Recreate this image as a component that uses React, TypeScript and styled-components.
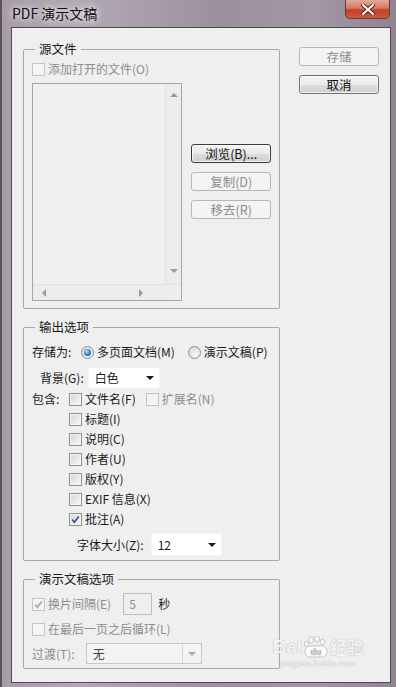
import React from 'react';
import styled, { createGlobalStyle, css } from 'styled-components';

const GlobalStyle = createGlobalStyle`
  html, body {
    margin: 0;
    padding: 0;
    width: 396px;
    height: 687px;
    overflow: hidden;
  }
  body {
    font-family: "Noto Sans CJK SC", "Noto Sans", sans-serif;
    font-size: 12px;
    color: #1a1a1a;
  }
`;

const Frame = styled.div`
  width: 396px;
  height: 687px;
  box-sizing: border-box;
  display: flex;
  flex-direction: column;
  background: linear-gradient(90deg, #a89ca9 0%, #b3a9b4 20%, #9c909d 55%, #a397a4 80%, #8f8490 100%);
  border-left: 2px solid #5a555b;
  position: relative;
`;

const TitleBar = styled.div`
  height: 27px;
  display: flex;
  justify-content: space-between;
  align-items: flex-start;
  flex-shrink: 0;
`;

const Title = styled.div`
  padding-left: 10px;
  line-height: 27px;
  font-size: 14px;
  color: #111;
  text-shadow: 0 0 6px rgba(255, 255, 255, 0.9), 0 0 10px rgba(255, 255, 255, 0.6);
`;

const CloseButton = styled.div`
  width: 45px;
  height: 19px;
  margin-right: 6px;
  box-sizing: border-box;
  border: 1px solid #6b3a34;
  border-top: none;
  border-radius: 0 0 5px 5px;
  background: linear-gradient(180deg, #e6a898 0%, #d57b68 45%, #c2412a 55%, #cc5a3e 100%);
  display: flex;
  align-items: center;
  justify-content: center;
`;

const Client = styled.div`
  flex: 1;
  margin: 0 5px 4px 9px;
  border: 1px solid #4f4a52;
  background: #efefef;
  display: flex;
  padding: 13px 11px 0 11px;
  position: relative;
`;

const LeftColumn = styled.div`
  width: 257px;
  display: flex;
  flex-direction: column;
  gap: 10px;
`;

const RightColumn = styled.div`
  width: 80px;
  margin-left: 19px;
  padding-top: 6px;
  display: flex;
  flex-direction: column;
  gap: 9px;
`;

const Group = styled.fieldset<{ $pt: number; $pb: number }>`
  margin: 0;
  min-width: 0;
  padding: ${(p) => p.$pt}px 8px ${(p) => p.$pb}px 8px;
  border: 1px solid #a7a7a7;
  border-radius: 2px;
  display: flex;
  flex-direction: column;
`;

const Legend = styled.legend`
  padding: 0 4px;
  margin-left: 3px;
  font-size: 12.5px;
  line-height: 16px;
  color: #1a1a1a;
`;

const Button = styled.div<{ $disabled?: boolean; $focused?: boolean }>`
  height: 19px;
  box-sizing: border-box;
  border: 1px solid #707070;
  border-radius: 3px;
  background: linear-gradient(180deg, #f3f3f3 0%, #ebebeb 50%, #dddddd 51%, #cfcfcf 100%);
  box-shadow: inset 0 0 0 1px rgba(255, 255, 255, 0.7);
  font-size: 12.5px;
  line-height: 17px;
  text-align: center;
  color: #111;
  ${(p) =>
    p.$focused &&
    css`
      border-color: #3a3a3a;
    `}
  ${(p) =>
    p.$disabled &&
    css`
      border-color: #b5b8ba;
      background: #f4f4f4;
      box-shadow: none;
      color: #8b8b8b;
    `}
`;

const Row = styled.div<{ $h?: number; $mt?: number; $ml?: number }>`
  display: flex;
  align-items: center;
  height: ${(p) => p.$h ?? 20}px;
  margin-top: ${(p) => p.$mt ?? 0}px;
  margin-left: ${(p) => p.$ml ?? 0}px;
  flex-shrink: 0;
`;

const Text = styled.span<{ $disabled?: boolean; $ml?: number; $w?: number }>`
  color: ${(p) => (p.$disabled ? '#8d8d8d' : '#1a1a1a')};
  margin-left: ${(p) => p.$ml ?? 0}px;
  ${(p) => p.$w !== undefined && `width: ${p.$w}px;`}
  white-space: nowrap;
  line-height: 20px;
  flex-shrink: 0;
`;

const CheckLabel = styled.label<{ $ml?: number }>`
  display: flex;
  align-items: center;
  gap: 3px;
  height: 20px;
  margin-left: ${(p) => p.$ml ?? 0}px;
  flex-shrink: 0;
`;

const Box = styled.span<{ $disabled?: boolean }>`
  width: 13px;
  height: 13px;
  box-sizing: border-box;
  border: 1px solid ${(p) => (p.$disabled ? '#c3c3c3' : '#8e8f8f')};
  background: ${(p) =>
    p.$disabled ? '#f4f4f4' : 'linear-gradient(135deg, #d0d0d0 0%, #ececec 60%, #f8f8f8 100%)'};
  box-shadow: inset 0 0 0 1px #f6f6f6;
  display: flex;
  align-items: center;
  justify-content: center;
  flex-shrink: 0;
`;

const Radio = styled.span<{ $on?: boolean; $ml?: number }>`
  width: 13px;
  height: 13px;
  margin-left: ${(p) => p.$ml ?? 0}px;
  box-sizing: border-box;
  border-radius: 50%;
  border: 1px solid #8e8f8f;
  background: radial-gradient(circle at 60% 65%, #f7f7f7 0%, #e2e2e2 60%, #cfcfcf 100%);
  display: flex;
  align-items: center;
  justify-content: center;
  flex-shrink: 0;
  &::after {
    content: '';
    display: ${(p) => (p.$on ? 'block' : 'none')};
    width: 7px;
    height: 7px;
    border-radius: 50%;
    background: radial-gradient(circle at 40% 35%, #bfe6ff 0%, #3c8fd6 45%, #164a86 100%);
  }
`;

const Select = styled.div<{ $w: number; $h: number; $disabled?: boolean; $ml?: number }>`
  width: ${(p) => p.$w}px;
  height: ${(p) => p.$h}px;
  margin-left: ${(p) => p.$ml ?? 0}px;
  box-sizing: border-box;
  background: ${(p) => (p.$disabled ? '#f3f3f3' : '#ffffff')};
  border: 1px solid ${(p) => (p.$disabled ? '#c6c6c6' : '#f4f4f4')};
  display: flex;
  align-items: center;
  padding-left: 6px;
  flex-shrink: 0;
`;

const SelectValue = styled.span<{ $disabled?: boolean }>`
  flex: 1;
  color: ${(p) => (p.$disabled ? '#444' : '#1a1a1a')};
  line-height: 18px;
`;

const SelectArrow = styled.span<{ $disabled?: boolean }>`
  width: 18px;
  align-self: stretch;
  display: flex;
  align-items: center;
  justify-content: center;
  ${(p) => p.$disabled && 'border-left: 1px solid #d4d4d4;'}
`;

const NumberBox = styled.div`
  width: 29px;
  height: 22px;
  box-sizing: border-box;
  margin-left: 12px;
  border: 1px solid #bdbdbd;
  background: #efefef;
  color: #8d8d8d;
  line-height: 20px;
  padding-left: 5px;
  flex-shrink: 0;
`;

const ListRow = styled.div`
  display: flex;
  margin-top: 4px;
`;

const ListBox = styled.div`
  width: 151px;
  height: 218px;
  box-sizing: border-box;
  border: 1px solid #a6a6a6;
  background: #f0f0f0;
  display: grid;
  grid-template-columns: 1fr 15px;
  grid-template-rows: 1fr 15px;
`;

const ListArea = styled.div`
  border-right: 1px solid #e2e2e2;
  border-bottom: 1px solid #e2e2e2;
`;

const VScroll = styled.div`
  background: #ececec;
  display: flex;
  flex-direction: column;
  justify-content: space-between;
  align-items: center;
  padding: 8px 0 10px;
  border-bottom: 1px solid #e2e2e2;
`;

const HScroll = styled.div`
  background: #ececec;
  display: flex;
  justify-content: space-between;
  align-items: center;
  padding: 0 22px 0 8px;
`;

const Corner = styled.div`
  background: #eeeeee;
`;

const ButtonColumn = styled.div`
  width: 80px;
  margin-left: 9px;
  padding-top: 61px;
  display: flex;
  flex-direction: column;
  gap: 9px;
`;

const IncludeRow = styled.div`
  display: flex;
  align-items: flex-start;
`;

const IncludeList = styled.div`
  display: flex;
  flex-direction: column;
`;

const Watermark = styled.div`
  position: absolute;
  right: 26px;
  bottom: 14px;
  display: flex;
  flex-direction: column;
  align-items: center;
  color: rgba(255, 255, 255, 0.85);
  text-shadow: 0 0 1px #b8b8b8, 0 0 1px #b8b8b8;
  pointer-events: none;
`;

const WatermarkMain = styled.div`
  display: flex;
  align-items: center;
  font-family: "Liberation Sans", sans-serif;
  font-weight: bold;
  font-size: 19px;
  line-height: 22px;
  gap: 1px;
`;

const WatermarkCjk = styled.span`
  font-family: "Noto Sans CJK SC", sans-serif;
  font-size: 17px;
`;

const WatermarkSub = styled.div`
  font-family: "Liberation Serif", serif;
  font-size: 9px;
  line-height: 10px;
  letter-spacing: 0.5px;
`;

const Check = ({ disabled }: { disabled?: boolean }) => (
  <svg width="9" height="9" viewBox="0 0 9 9">
    <path
      d="M1.2 4.6 L3.4 7.2 L7.8 1.4"
      fill="none"
      stroke={disabled ? '#a6a6a6' : '#2b4f8f'}
      strokeWidth="1.6"
    />
  </svg>
);

const Triangle = ({ dir, color }: { dir: 'up' | 'down' | 'left' | 'right'; color: string }) => {
  const paths = {
    up: 'M0 5 L4 1 L8 5 Z',
    down: 'M0 1 L4 5 L8 1 Z',
    left: 'M5 0 L1 4 L5 8 Z',
    right: 'M1 0 L5 4 L1 8 Z',
  };
  const vertical = dir === 'up' || dir === 'down';
  return (
    <svg width={vertical ? 8 : 6} height={vertical ? 6 : 8} viewBox={vertical ? '0 0 8 6' : '0 0 6 8'}>
      <path d={paths[dir]} fill={color} />
    </svg>
  );
};

const CheckItem = ({
  label,
  checked,
  disabled,
  ml,
}: {
  label: string;
  checked?: boolean;
  disabled?: boolean;
  ml?: number;
}) => (
  <CheckLabel $ml={ml}>
    <Box $disabled={disabled}>{checked && <Check disabled={disabled} />}</Box>
    <Text $disabled={disabled}>{label}</Text>
  </CheckLabel>
);

const Dropdown = ({
  value,
  w,
  h,
  ml,
  disabled,
}: {
  value: string;
  w: number;
  h: number;
  ml?: number;
  disabled?: boolean;
}) => (
  <Select $w={w} $h={h} $ml={ml} $disabled={disabled}>
    <SelectValue $disabled={disabled}>{value}</SelectValue>
    <SelectArrow $disabled={disabled}>
      <Triangle dir="down" color={disabled ? '#a8a8a8' : '#1a1a1a'} />
    </SelectArrow>
  </Select>
);

const includes = ['标题(I)', '说明(C)', '作者(U)', '版权(Y)', 'EXIF 信息(X)'];

const App = () => {
  return (
    <>
      <GlobalStyle />
      <Frame>
        <TitleBar>
          <Title>PDF 演示文稿</Title>
          <CloseButton>
            <svg width="14" height="11" viewBox="0 0 14 11">
              <path d="M2 1 L12 10 M12 1 L2 10" stroke="#5a1c12" strokeWidth="4" strokeLinecap="round" />
              <path d="M2 1 L12 10 M12 1 L2 10" stroke="#ffffff" strokeWidth="2.2" strokeLinecap="round" />
            </svg>
          </CloseButton>
        </TitleBar>
        <Client>
          <LeftColumn>
            <Group $pt={2} $pb={7}>
              <Legend>源文件</Legend>
              <CheckItem label="添加打开的文件(O)" disabled />
              <ListRow>
                <ListBox>
                  <ListArea />
                  <VScroll>
                    <Triangle dir="up" color="#9a9a9a" />
                    <Triangle dir="down" color="#9a9a9a" />
                  </VScroll>
                  <HScroll>
                    <Triangle dir="left" color="#9a9a9a" />
                    <Triangle dir="right" color="#9a9a9a" />
                  </HScroll>
                  <Corner />
                </ListBox>
                <ButtonColumn>
                  <Button $focused>浏览(B)...</Button>
                  <Button $disabled>复制(D)</Button>
                  <Button $disabled>移去(R)</Button>
                </ButtonColumn>
              </ListRow>
            </Group>

            <Group $pt={7} $pb={4}>
              <Legend>输出选项</Legend>
              <Row>
                <Text $w={49}>存储为:</Text>
                <Radio $on />
                <Text $ml={3}>多页面文档(M)</Text>
                <Radio $ml={13} />
                <Text $ml={3}>演示文稿(P)</Text>
              </Row>
              <Row $h={22} $mt={5} $ml={8}>
                <Text>背景(G):</Text>
                <Dropdown value="白色" w={72} h={22} ml={4} />
              </Row>
              <IncludeRow>
                <Text $w={37}>包含:</Text>
                <IncludeList>
                  <Row>
                    <CheckItem label="文件名(F)" />
                    <CheckItem label="扩展名(N)" disabled ml={10} />
                  </Row>
                  {includes.map((item) => (
                    <CheckItem key={item} label={item} />
                  ))}
                  <CheckItem label="批注(A)" checked />
                </IncludeList>
              </IncludeRow>
              <Row $h={23} $mt={4} $ml={45}>
                <Text>字体大小(Z):</Text>
                <Dropdown value="12" w={71} h={23} ml={7} />
              </Row>
            </Group>

            <Group $pt={6} $pb={4}>
              <Legend>演示文稿选项</Legend>
              <Row $h={22}>
                <CheckItem label="换片间隔(E)" checked disabled />
                <NumberBox>5</NumberBox>
                <Text $ml={6}>秒</Text>
              </Row>
              <Row $mt={4}>
                <CheckItem label="在最后一页之后循环(L)" disabled />
              </Row>
              <Row $h={21} $mt={4}>
                <Text $disabled>过渡(T):</Text>
                <Dropdown value="无" w={116} h={21} ml={11} disabled />
              </Row>
            </Group>
          </LeftColumn>

          <RightColumn>
            <Button $disabled>存储</Button>
            <Button>取消</Button>
          </RightColumn>

          <Watermark>
            <WatermarkMain>
              <span>Bai</span>
              <svg width="26" height="22" viewBox="0 0 26 22">
                <g fill="rgba(255,255,255,0.85)" stroke="#b8b8b8" strokeWidth="0.8">
                  <ellipse cx="8" cy="4" rx="2.4" ry="3" />
                  <ellipse cx="14" cy="3" rx="2.4" ry="3" />
                  <ellipse cx="19.5" cy="6" rx="2.2" ry="2.8" />
                  <ellipse cx="3.5" cy="8" rx="2.2" ry="2.8" />
                  <rect x="2" y="10" width="22" height="11" rx="5" />
                </g>
                <text x="13" y="19" textAnchor="middle" fontSize="9" fontFamily="Liberation Sans" fill="#c8c8c8" stroke="none">
                  du
                </text>
              </svg>
              <WatermarkCjk>经验</WatermarkCjk>
            </WatermarkMain>
            <WatermarkSub>jingyan.baidu.com</WatermarkSub>
          </Watermark>
        </Client>
      </Frame>
    </>
  );
};

export default App;
